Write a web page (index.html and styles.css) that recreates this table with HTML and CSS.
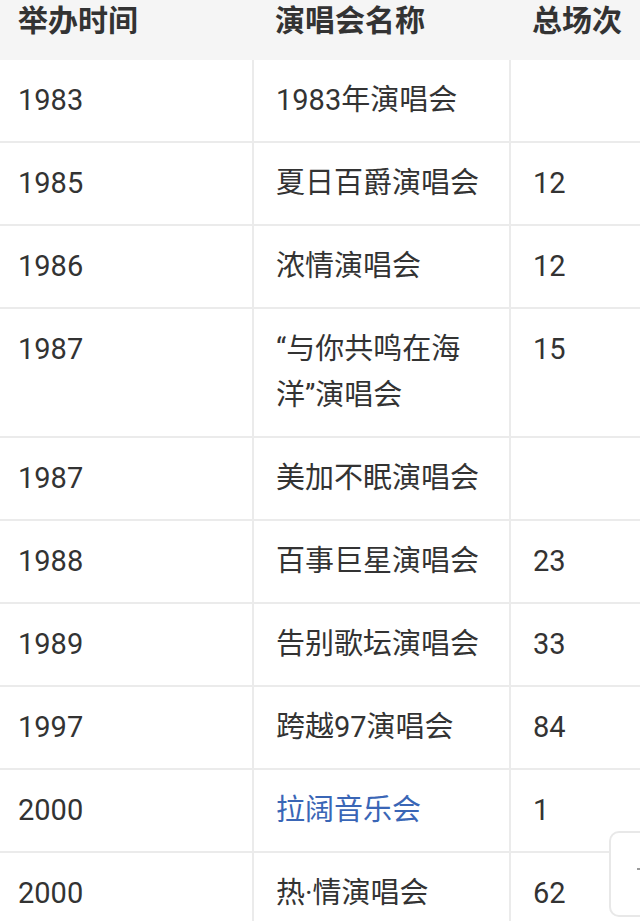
FILE: index.html
```html
<!DOCTYPE html>
<html lang="zh-CN">
<head>
<meta charset="utf-8">
<link rel="stylesheet" href="styles.css">
<title>演唱会</title>
</head>
<body>
<table class="tbl">
  <colgroup>
    <col class="c1"><col class="c2"><col class="c3">
  </colgroup>
  <thead>
    <tr><th>举办时间</th><th>演唱会名称</th><th>总场次</th></tr>
  </thead>
  <tbody>
    <tr><td>1983</td><td>1983年演唱会</td><td></td></tr>
    <tr><td>1985</td><td>夏日百爵演唱会</td><td>12</td></tr>
    <tr><td>1986</td><td>浓情演唱会</td><td>12</td></tr>
    <tr><td>1987</td><td>“与你共鸣在海<br>洋”演唱会</td><td>15</td></tr>
    <tr><td>1987</td><td>美加不眠演唱会</td><td></td></tr>
    <tr><td>1988</td><td>百事巨星演唱会</td><td>23</td></tr>
    <tr><td>1989</td><td>告别歌坛演唱会</td><td>33</td></tr>
    <tr><td>1997</td><td>跨越97演唱会</td><td>84</td></tr>
    <tr><td>2000</td><td><a class="link" href="#">拉阔音乐会</a></td><td>1</td></tr>
    <tr><td>2000</td><td>热·情演唱会</td><td>62</td></tr>
  </tbody>
</table>
<div class="float-btn"><span class="float-mark"></span></div>
</body>
</html>
```

FILE: styles.css
```css
html, body {
  margin: 0;
  padding: 0;
  background: #ffffff;
  overflow: hidden;
}
body {
  width: 640px;
  height: 921px;
  font-family: Roboto, "Noto Sans CJK SC", sans-serif;
  color: #333333;
}
.tbl {
  width: 640px;
  table-layout: fixed;
  border-collapse: collapse;
  font-size: 29px;
}
.c1 { width: 253px; }
.c2 { width: 257px; }
.c3 { width: 130px; }
.tbl th {
  background: #f5f5f5;
  height: 60px;
  padding: 0 0 0 22px;
  text-align: left;
  vertical-align: top;
  line-height: 42px;
  font-size: 30px;
  font-weight: bold;
  color: #333333;
  box-sizing: border-box;
}
.tbl th:first-child { padding-left: 18px; }
.tbl td {
  border: 2px solid #ebebeb;
  padding: 17px 0 18px 22px;
  line-height: 46px;
  vertical-align: top;
  white-space: nowrap;
}
.tbl td:first-child { padding-left: 18px; border-left: none; }
.tbl td:last-child { border-right: none; }
.tbl tbody tr:first-child td { border-top: none; }
.link {
  color: #3a66b6;
  text-decoration: none;
}
.float-btn {
  position: fixed;
  left: 609px;
  top: 831px;
  width: 60px;
  height: 86px;
  box-sizing: border-box;
  border: 2px solid #e8e8e8;
  border-radius: 10px;
  background: #ffffff;
}
.float-mark {
  position: absolute;
  left: 26px;
  top: 35px;
  width: 3px;
  height: 2px;
  background: #9a9a9a;
}
```
